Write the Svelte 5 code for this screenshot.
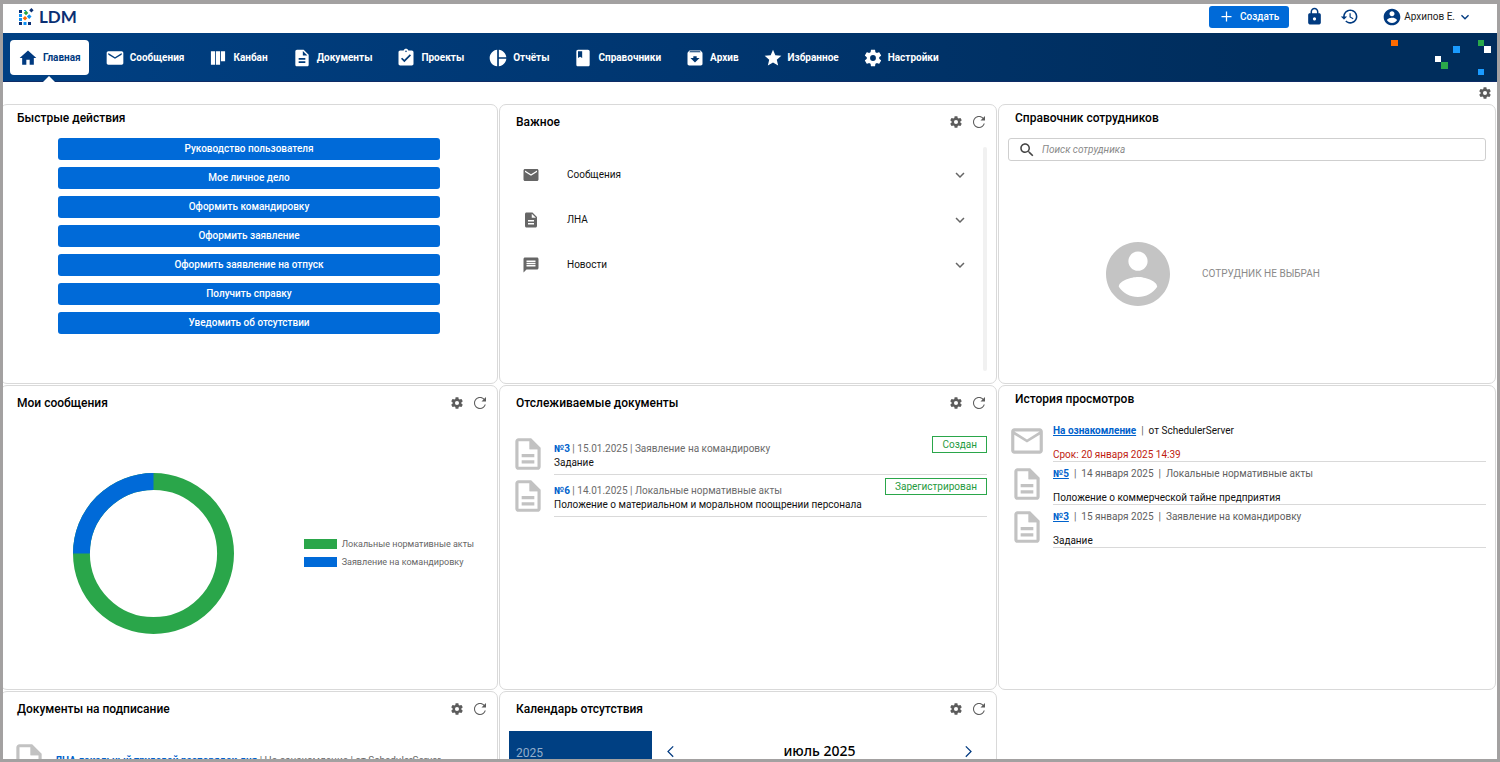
<script lang="ts">
  interface Tracked {
    number: string;
    date: string;
    kind: string;
    title: string;
    status: string;
  }

  const icons = {
    home: "M10 20v-6h4v6h5v-8h3L12 3 2 12h3v8z",
    mail: "M20 4H4c-1.1 0-1.99.9-1.99 2L2 18c0 1.1.9 2 2 2h16c1.1 0 2-.9 2-2V6c0-1.1-.9-2-2-2zm0 4l-8 5-8-5V6l8 5 8-5v2z",
    mailOutline:
      "M20 4H4c-1.1 0-1.99.9-1.99 2L2 18c0 1.1.9 2 2 2h16c1.1 0 2-.9 2-2V6c0-1.1-.9-2-2-2zm0 14H4V8l8 5 8-5v10zm-8-7L4 6h16l-8 5z",
    board: "M3.5 4h5v16h-5zM9.5 4h5v16h-5zM15.5 4h5v12h-5z",
    doc: "M14 2H6c-1.1 0-1.99.9-1.99 2L4 20c0 1.1.89 2 1.99 2H18c1.1 0 2-.9 2-2V8l-6-6zm2 16H8v-2h8v2zm0-4H8v-2h8v2zm-3-5V3.5L18.5 9H13z",
    docOutline:
      "M8 16h8v2H8zm0-4h8v2H8zm6-10H6c-1.1 0-2 .9-2 2v16c0 1.1.89 2 1.99 2H18c1.1 0 2-.9 2-2V8l-6-6zm4 18H6V4h7v5h5v11z",
    tasks:
      "M19 3h-4.18C14.4 1.84 13.3 1 12 1c-1.3 0-2.4.84-2.82 2H5c-1.1 0-2 .9-2 2v14c0 1.1.9 2 2 2h14c1.1 0 2-.9 2-2V5c0-1.1-.9-2-2-2zm-7 0c.55 0 1 .45 1 1s-.45 1-1 1-1-.45-1-1 .45-1 1-1zm-2 14l-4-4 1.41-1.41L10 14.17l6.59-6.59L18 9l-8 8z",
    pie: "M11 2v20c-5.07-.5-9-4.79-9-10s3.93-9.5 9-10zm2.03 0v8.99H22c-.47-4.74-4.24-8.52-8.97-8.99zm0 11.01V22c4.74-.47 8.5-4.25 8.97-8.99h-8.97z",
    book: "M18 2H6c-1.1 0-2 .9-2 2v16c0 1.1.9 2 2 2h12c1.1 0 2-.9 2-2V4c0-1.1-.9-2-2-2zM6 4h5v8l-2.5-1.5L6 12V4z",
    archive:
      "M20.54 5.23l-1.39-1.68C18.88 3.21 18.47 3 18 3H6c-.47 0-.88.21-1.16.55L3.46 5.23C3.17 5.57 3 6.02 3 6.5V19c0 1.1.9 2 2 2h14c1.1 0 2-.9 2-2V6.5c0-.48-.17-.93-.46-1.27zM12 17.5L6.5 12H10v-2h4v2h3.5L12 17.5zM5.12 5l.81-1h12l.94 1H5.12z",
    star: "M12 17.27L18.18 21l-1.64-7.03L22 9.24l-7.19-.61L12 2 9.19 8.63 2 9.24l5.46 4.73L5.82 21z",
    cog: "M12,15.5A3.5,3.5 0 0,1 8.5,12A3.5,3.5 0 0,1 12,8.5A3.5,3.5 0 0,1 15.5,12A3.5,3.5 0 0,1 12,15.5M19.43,12.97C19.47,12.65 19.5,12.33 19.5,12C19.5,11.67 19.47,11.34 19.43,11L21.54,9.37C21.73,9.22 21.78,8.95 21.66,8.73L19.66,5.27C19.54,5.05 19.27,4.96 19.05,5.05L16.56,6.05C16.04,5.66 15.5,5.32 14.87,5.07L14.5,2.42C14.46,2.18 14.25,2 14,2H10C9.75,2 9.54,2.18 9.5,2.42L9.13,5.07C8.5,5.32 7.96,5.66 7.44,6.05L4.95,5.05C4.73,4.96 4.46,5.05 4.34,5.27L2.34,8.73C2.21,8.95 2.27,9.22 2.46,9.37L4.57,11C4.53,11.34 4.5,11.67 4.5,12C4.5,12.33 4.53,12.65 4.57,12.97L2.46,14.63C2.27,14.78 2.21,15.05 2.34,15.27L4.34,18.73C4.46,18.95 4.73,19.03 4.95,18.95L7.44,17.94C7.96,18.34 8.5,18.68 9.13,18.93L9.5,21.58C9.54,21.82 9.75,22 10,22H14C14.25,22 14.46,21.82 14.5,21.58L14.87,18.93C15.5,18.67 16.04,18.34 16.56,17.94L19.05,18.95C19.27,19.03 19.54,18.95 19.66,18.73L21.66,15.27C21.78,15.05 21.73,14.78 21.54,14.63L19.43,12.97Z",
    refresh:
      "M17.65 6.35C16.2 4.9 14.21 4 12 4c-4.42 0-7.99 3.58-7.99 8s3.57 8 7.99 8c3.73 0 6.84-2.55 7.73-6h-1.5c-.85 2.7-3.3 4.6-6.23 4.6-3.65 0-6.6-2.95-6.6-6.6s2.95-6.6 6.6-6.6c1.82 0 3.47.75 4.66 1.94L14 10h6V4l-2.35 2.35z",
    lock: "M18 8h-1V6c0-2.76-2.24-5-5-5S7 3.24 7 6v2H6c-1.1 0-2 .9-2 2v10c0 1.1.9 2 2 2h12c1.1 0 2-.9 2-2V10c0-1.1-.9-2-2-2zm-6 9c-1.1 0-2-.9-2-2s.9-2 2-2 2 .9 2 2-.9 2-2 2zm3.1-9H8.9V6c0-1.71 1.39-3.1 3.1-3.1 1.71 0 3.1 1.39 3.1 3.1v2z",
    history:
      "M13 3c-4.97 0-9 4.03-9 9H1l3.89 3.89.07.14L9 12H6c0-3.87 3.13-7 7-7s7 3.13 7 7-3.13 7-7 7c-1.93 0-3.68-.79-4.94-2.06l-1.42 1.42C8.27 19.99 10.51 21 13 21c4.97 0 9-4.03 9-9s-4.03-9-9-9zm-1 5v5l4.28 2.54.72-1.21-3.5-2.08V8H12z",
    account:
      "M12 2C6.48 2 2 6.48 2 12s4.48 10 10 10 10-4.48 10-10S17.52 2 12 2zm0 3c1.66 0 3 1.34 3 3s-1.34 3-3 3-3-1.34-3-3 1.34-3 3-3zm0 14.2c-2.5 0-4.71-1.28-6-3.22.03-1.99 4-3.08 6-3.08 1.99 0 5.97 1.09 6 3.08-1.29 1.94-3.5 3.22-6 3.22z",
    down: "M7.41 8.59L12 13.17l4.59-4.58L18 10l-6 6-6-6 1.41-1.41z",
    left: "M15.41 4.41L14 3l-9 9 9 9 1.41-1.41L7.83 12z",
    right: "M8.59 4.41L10 3l9 9-9 9-1.41-1.41L16.17 12z",
    plus: "M11 4h2v7h7v2h-7v7h-2v-7H4v-2h7z",
    chat: "M20 2H4c-1.1 0-1.99.9-1.99 2L2 22l4-4h14c1.1 0 2-.9 2-2V4c0-1.1-.9-2-2-2zm-2 12H6v-2h12v2zm0-3H6V9h12v2zm0-3H6V6h12v2z",
    search:
      "M15.5 14h-.79l-.28-.27C15.41 12.59 16 11.11 16 9.5 16 5.91 13.09 3 9.5 3S3 5.91 3 9.5 5.91 16 9.5 16c1.61 0 3.09-.59 4.23-1.57l.27.28v.79l5 4.99L20.49 19l-4.99-5zm-6 0C7.01 14 5 11.99 5 9.5S7.01 5 9.5 5 14 7.01 14 9.5 11.99 14 9.5 14z",
  };

  type IconName = keyof typeof icons;

  const menu: { label: string; icon: IconName }[] = [
    { label: "Главная", icon: "home" },
    { label: "Сообщения", icon: "mail" },
    { label: "Канбан", icon: "board" },
    { label: "Документы", icon: "doc" },
    { label: "Проекты", icon: "tasks" },
    { label: "Отчёты", icon: "pie" },
    { label: "Справочники", icon: "book" },
    { label: "Архив", icon: "archive" },
    { label: "Избранное", icon: "star" },
    { label: "Настройки", icon: "cog" },
  ];
  let active = $state("Главная");

  const actions = [
    "Руководство пользователя",
    "Мое личное дело",
    "Оформить командировку",
    "Оформить заявление",
    "Оформить заявление на отпуск",
    "Получить справку",
    "Уведомить об отсутствии",
  ];

  const important: { label: string; icon: IconName }[] = [
    { label: "Сообщения", icon: "mail" },
    { label: "ЛНА", icon: "doc" },
    { label: "Новости", icon: "chat" },
  ];

  const legend = [
    { label: "Локальные нормативные акты", tone: "green" },
    { label: "Заявление на командировку", tone: "blue" },
  ];

  const tracked: Tracked[] = [
    {
      number: "№3",
      date: "15.01.2025",
      kind: "Заявление на командировку",
      title: "Задание",
      status: "Создан",
    },
    {
      number: "№6",
      date: "14.01.2025",
      kind: "Локальные нормативные акты",
      title: "Положение о материальном и моральном поощрении персонала",
      status: "Зарегистрирован",
    },
  ];

  const viewed = [
    {
      number: "№5",
      date: "14 января 2025",
      kind: "Локальные нормативные акты",
      title: "Положение о коммерческой тайне предприятия",
    },
    {
      number: "№3",
      date: "15 января 2025",
      kind: "Заявление на командировку",
      title: "Задание",
    },
  ];

  let query = $state("");
</script>

{#snippet icon(name: IconName, size: number)}
  <svg width={size} height={size} viewBox="0 0 24 24" aria-hidden="true">
    <path d={icons[name]} />
  </svg>
{/snippet}

{#snippet docIcon()}
  <svg class="big-icon" width="38" height="38" viewBox="0 0 24 24" aria-hidden="true">
    <path d={icons.docOutline} />
    <path d="M13 3v6h6z" />
  </svg>
{/snippet}

{#snippet tools()}
  <div class="tools">
    <button class="icon-btn" aria-label="Настроить">{@render icon("cog", 14)}</button>
    <button class="icon-btn" aria-label="Обновить">{@render icon("refresh", 18)}</button>
  </div>
{/snippet}

<div class="frame">
  <header class="topbar">
    <a class="logo" href="#home">
      <svg width="16" height="18" viewBox="0 0 16 18" aria-hidden="true">
        <g fill="#0b2f73">
          <path d="M0 2h3v3H0zM0 14h3v3H0zM9 14h3v3H9z" />
          <path d="M12.4 0l2.2 2.2-2.2 2.2-2.2-2.2z" />
        </g>
        <g fill="#0a8ff5">
          <path d="M0 6h3v3H0zM0 10h3v3H0zM4.5 14h3v3h-3zM5 2h2v1H5z" />
          <path d="M10.2 6.3l2.3 2.3-2.3 2.3-2.3-2.3z" />
        </g>
        <path fill="#26a346" d="M7 2.6l2.3 2.3L7 7.2 4.7 4.9z" />
        <path fill="#ff6a00" d="M6 8l2.3 2.3L6 12.6 3.7 10.3z" />
      </svg>
      <span>LDM</span>
    </a>
    <div class="top-actions">
      <button class="create">{@render icon("plus", 15)}Создать</button>
      <button class="icon-btn navy" aria-label="Блокировка">{@render icon("lock", 19)}</button>
      <button class="icon-btn navy" aria-label="История">{@render icon("history", 19)}</button>
      <button class="user">
        {@render icon("account", 20)}
        <span>Архипов Е.</span>
        {@render icon("down", 16)}
      </button>
    </div>
  </header>

  <nav class="menu">
    {#each menu as item (item.label)}
      <button
        class="menu-item"
        class:active={item.label === active}
        onclick={() => (active = item.label)}
      >
        {@render icon(item.icon, 20)}
        <span>{item.label}</span>
      </button>
    {/each}
    <svg class="confetti" width="106" height="48" viewBox="0 0 106 48" aria-hidden="true">
      <path fill="#ff6a00" d="M0 7h7v6H0z" />
      <path fill="#1a9bff" d="M62 13h7v7h-7zM87 36h6v6h-6z" />
      <path fill="#2aa84a" d="M87 7h6v6h-6zM50 29h7v7h-7z" />
      <path fill="#fff" d="M93 13h7v7h-7zM44 23h6v6h-6z" />
    </svg>
  </nav>

  <div class="page-tools">
    <button class="icon-btn" aria-label="Настроить страницу">{@render icon("cog", 14)}</button>
  </div>

  <main class="grid">
    <section class="card">
      <div class="card-head plain"><h2>Быстрые действия</h2></div>
      <div class="actions">
        {#each actions as action}
          <button class="action">{action}</button>
        {/each}
      </div>
    </section>

    <section class="card">
      <div class="card-head"><h2>Важное</h2>{@render tools()}</div>
      <div class="important">
        <div class="important-list">
          {#each important as item}
            <button class="important-row">
              {@render icon(item.icon, 18)}
              <span>{item.label}</span>
              {@render icon("down", 18)}
            </button>
          {/each}
        </div>
        <div class="scroll-track"></div>
      </div>
    </section>

    <section class="card">
      <div class="card-head plain"><h2>Справочник сотрудников</h2></div>
      <label class="search">
        {@render icon("search", 18)}
        <input
          type="text"
          placeholder="Поиск сотрудника"
          aria-label="Поиск сотрудника"
          bind:value={query}
        />
      </label>
      <div class="employee">
        <svg width="64" height="64" viewBox="2 2 20 20" aria-hidden="true">
          <path d={icons.account} />
        </svg>
        <span>СОТРУДНИК НЕ ВЫБРАН</span>
      </div>
    </section>

    <section class="card">
      <div class="card-head"><h2>Мои сообщения</h2>{@render tools()}</div>
      <div class="chart">
        <svg width="161" height="161" viewBox="0 0 162 162" role="img" aria-label="Мои сообщения">
          <circle class="ring green" cx="81" cy="81" r="72.5" />
          <path class="ring blue" d="M8.5 81A72.5 72.5 0 0 1 81 8.5" />
        </svg>
        <ul class="legend">
          {#each legend as entry}
            <li><i class={entry.tone}></i>{entry.label}</li>
          {/each}
        </ul>
      </div>
    </section>

    <section class="card">
      <div class="card-head"><h2>Отслеживаемые документы</h2>{@render tools()}</div>
      <div class="tracked">
        {#each tracked as doc}
          <article class="doc-row">
            {@render docIcon()}
            <div class="doc-body">
              <div class="doc-text">
                <div class="meta">
                  <a href="#doc">{doc.number}</a> | {doc.date} | {doc.kind}
                </div>
                <div>{doc.title}</div>
              </div>
              <span class="status">{doc.status}</span>
            </div>
          </article>
        {/each}
      </div>
    </section>

    <section class="card">
      <div class="card-head plain"><h2>История просмотров</h2></div>
      <div class="viewed">
        <article class="view-row">
          <svg class="big-icon" width="38" height="38" viewBox="0 0 24 24" aria-hidden="true">
            <path d={icons.mailOutline} />
          </svg>
          <div class="view-body">
            <div class="view-meta">
              <a href="#task">На ознакомление</a><span>|</span><b>от SchedulerServer</b>
            </div>
            <div class="deadline">Срок: 20 января 2025 14:39</div>
          </div>
        </article>
        {#each viewed as doc}
          <article class="view-row">
            {@render docIcon()}
            <div class="view-body">
              <div class="view-meta">
                <a href="#doc">{doc.number}</a><span>|</span><span>{doc.date}</span><span>|</span
                ><span>{doc.kind}</span>
              </div>
              <div>{doc.title}</div>
            </div>
          </article>
        {/each}
      </div>
    </section>

    <section class="card">
      <div class="card-head"><h2>Документы на подписание</h2>{@render tools()}</div>
      <div class="tracked">
        <article class="doc-row">
          {@render docIcon()}
          <div class="doc-body">
            <div class="doc-text sign">
              <div class="meta">
                <a href="#doc">ЛНА локальный трудовой распорядок дня</a> | На ознакомление | от SchedulerServer
              </div>
            </div>
          </div>
        </article>
      </div>
    </section>

    <section class="card">
      <div class="card-head"><h2>Календарь отсутствия</h2>{@render tools()}</div>
      <div class="calendar">
        <div class="year">2025</div>
        <div class="month">
          <button class="icon-btn navy" aria-label="Предыдущий месяц">{@render icon("left", 15)}</button>
          <strong>июль 2025</strong>
          <button class="icon-btn navy" aria-label="Следующий месяц">{@render icon("right", 15)}</button>
        </div>
      </div>
    </section>
  </main>
</div>

<style>
  :global(body) {
    margin: 0;
    background: #fff;
  }
  .frame {
    --navy: #003a80;
    --blue: #006ad8;
    --green: #2aa64a;
    --grey: #5f5f5f;
    --line: #d9d9d9;
    box-sizing: border-box;
    height: 100vh;
    overflow: hidden;
    border: 3px solid #a3a1a1;
    border-top-width: 4px;
    background: #fff;
    color: #111;
    font: 10px/14px Roboto, sans-serif;
  }
  svg {
    display: block;
    flex: none;
    fill: currentColor;
  }
  button {
    padding: 0;
    border: 0;
    background: none;
    color: inherit;
    font: inherit;
    cursor: pointer;
  }
  .icon-btn {
    color: #5c5c5c;
  }
  .icon-btn.navy {
    color: var(--navy);
  }

  .topbar {
    display: flex;
    align-items: center;
    justify-content: space-between;
    box-sizing: border-box;
    height: 29px;
    padding: 0 24px 4px 16px;
  }
  .logo {
    display: flex;
    align-items: center;
    gap: 4px;
    color: #0b2f73;
    font: 700 17px/24px Lato, sans-serif;
    text-decoration: none;
  }
  .top-actions {
    display: flex;
    align-items: center;
    gap: 16px;
  }
  .create {
    display: flex;
    align-items: center;
    justify-content: center;
    gap: 6px;
    width: 80px;
    height: 22px;
    border-radius: 3px;
    background: var(--blue);
    color: #fff;
    font-weight: 500;
  }
  .user {
    display: flex;
    align-items: center;
    gap: 2px;
    margin-left: 7px;
    color: var(--navy);
  }
  .user span {
    color: #1c1c1c;
  }

  .menu {
    display: flex;
    align-items: center;
    gap: 8px;
    box-sizing: border-box;
    height: 49px;
    padding-left: 7px;
    border-bottom: 1px solid #0f2c66;
    background: linear-gradient(90deg, #004083 0%, #003670 45%, #002d5c 85%);
  }
  .menu-item {
    position: relative;
    display: flex;
    align-items: center;
    gap: 5px;
    box-sizing: border-box;
    height: 35px;
    padding: 1px 8px 0;
    border-radius: 4px;
    color: #fff;
    font-weight: 700;
    white-space: nowrap;
  }
  .menu-item.active {
    background: #fff;
    color: var(--navy);
  }
  .menu-item.active::after {
    position: absolute;
    bottom: -7px;
    left: 50%;
    margin-left: -6px;
    border: 6px solid transparent;
    border-top-width: 0;
    border-bottom-color: #fff;
    content: "";
  }
  .confetti {
    margin-left: auto;
  }

  .page-tools {
    display: flex;
    align-items: center;
    justify-content: flex-end;
    height: 22px;
    padding-right: 5px;
  }

  /* the first column tucks its left border under the window frame */
  .grid {
    display: grid;
    grid-template-columns: repeat(3, minmax(0, 1fr));
    grid-template-rows: 280px 305px;
    grid-auto-rows: 280px;
    gap: 1px;
    margin: 0 1px 0 -3px;
  }
  .card {
    display: flex;
    flex-direction: column;
    box-sizing: border-box;
    min-width: 0;
    border: 1px solid var(--line);
    border-radius: 7px;
  }
  .card-head {
    display: flex;
    align-items: center;
    justify-content: space-between;
    height: 34px;
    padding: 0 8px 0 16px;
  }
  .card-head.plain {
    height: 26px;
  }
  h2 {
    margin: 0;
    color: #000;
    font-size: 12px;
    font-weight: 500;
    line-height: 16px;
  }
  .tools {
    display: flex;
    align-items: center;
    gap: 7px;
  }

  .actions {
    display: flex;
    flex-direction: column;
    align-items: center;
    gap: 7px;
    padding-top: 7px;
  }
  .action {
    width: 77%;
    height: 22px;
    border-radius: 3px;
    background: var(--blue);
    color: #fff;
    font-weight: 500;
  }

  .important {
    display: flex;
    flex: 1;
    gap: 14px;
    padding: 8px 9px 12px 22px;
  }
  .important-list {
    flex: 1;
    padding-top: 5px;
  }
  .important-row {
    display: flex;
    align-items: center;
    width: 100%;
    height: 45px;
    color: #666;
  }
  .important-row span {
    flex: 1;
    padding-left: 27px;
    color: #111;
    text-align: left;
  }
  .scroll-track {
    width: 4px;
    border-radius: 2px;
    background: #f1f1f1;
  }

  .search {
    display: flex;
    align-items: center;
    gap: 6px;
    box-sizing: border-box;
    height: 23px;
    margin: 7px 9px 0;
    padding: 0 9px;
    border: 1px solid #cfcfcf;
    border-radius: 3px;
    color: #444;
  }
  .search input {
    flex: 1;
    min-width: 0;
    padding: 0;
    border: 0;
    outline: none;
    background: none;
    color: #111;
    font: inherit;
  }
  .search input::placeholder {
    color: #8a8a8a;
    font-style: italic;
    opacity: 1;
  }
  .employee {
    display: flex;
    flex: 1;
    align-items: center;
    gap: 32px;
    padding: 4px 0 0 107px;
    color: #c4c4c4;
  }
  .employee span {
    color: #8a8a8a;
  }

  .chart {
    display: flex;
    flex: 1;
    align-items: center;
    justify-content: space-between;
    padding: 0 23px 3px 72px;
  }
  .ring {
    fill: none;
    stroke-width: 17px;
  }
  .ring.green {
    stroke: var(--green);
  }
  .ring.blue {
    stroke: var(--blue);
  }
  .legend {
    display: grid;
    gap: 4px;
    margin: 0;
    padding: 0;
    color: #666;
    font-size: 9px;
    list-style: none;
  }
  .legend li {
    display: flex;
    align-items: center;
    gap: 5px;
  }
  .legend i {
    width: 33px;
    height: 10px;
  }
  .legend .green {
    background: var(--green);
  }
  .legend .blue {
    background: var(--blue);
  }

  .big-icon {
    color: #c2c2c2;
  }
  .tracked {
    padding: 13px 9px 0;
  }
  .doc-row,
  .view-row {
    display: flex;
    align-items: center;
    gap: 7px;
  }
  .doc-body {
    display: flex;
    flex: 1;
    justify-content: space-between;
    box-sizing: border-box;
    height: 42px;
    padding-top: 3px;
    border-bottom: 1px solid var(--line);
  }
  .doc-text {
    padding-top: 6px;
    white-space: nowrap;
  }
  .doc-text.sign {
    padding-top: 12px;
  }
  .meta {
    color: #6b6b6b;
  }
  .meta a {
    color: #0062cc;
    font-weight: 700;
    text-decoration: none;
  }
  .status {
    box-sizing: border-box;
    height: 17px;
    padding: 0 9px;
    border: 1px solid var(--green);
    color: #1f9a40;
    line-height: 15px;
  }

  .viewed {
    padding: 7px 9px 0;
  }
  .view-body {
    display: flex;
    flex: 1;
    flex-direction: column;
    justify-content: space-between;
    box-sizing: border-box;
    height: 43px;
    padding-top: 6px;
    border-bottom: 1px solid var(--line);
    line-height: 12px;
  }
  .view-meta {
    display: flex;
    gap: 5px;
    color: var(--grey);
  }
  .view-meta a {
    color: #0062cc;
    font-weight: 700;
  }
  .view-meta b {
    color: #111;
    font-weight: 400;
  }
  .deadline {
    color: #c01c10;
  }

  .calendar {
    display: flex;
    flex: 1;
    padding: 5px 9px 0;
  }
  .year {
    box-sizing: border-box;
    width: 143px;
    padding: 14px 7px;
    background: #004083;
    color: #93aecb;
    font-size: 12px;
    line-height: 16px;
  }
  .month {
    display: flex;
    flex: 1;
    align-items: center;
    justify-content: space-between;
    height: 40px;
    padding: 0 12px;
  }
  .month strong {
    color: #000;
    font: 500 14px/20px "Noto Sans", sans-serif;
  }
</style>
